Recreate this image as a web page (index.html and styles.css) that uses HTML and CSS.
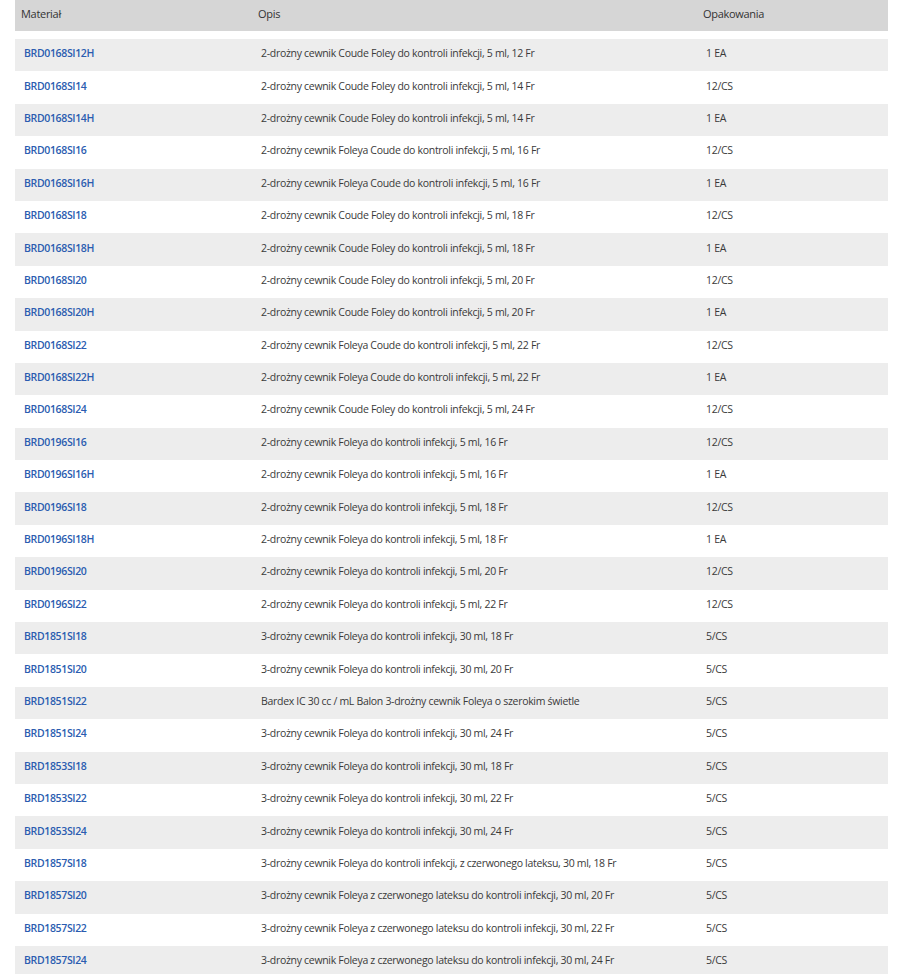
FILE: index.html
```html
<!DOCTYPE html>
<html lang="pl">
<head>
<meta charset="utf-8">
<title>Materiały</title>
<link rel="stylesheet" href="styles.css">
</head>
<body>
<div class="table">
  <div class="head">
    <div class="hcell">Materiał</div>
    <div class="hcell">Opis</div>
    <div class="hcell">Opakowania</div>
  </div>
  <div class="row"><a class="cell mat" href="#">BRD0168SI12H</a><div class="cell">2-drożny cewnik Coude Foley do kontroli infekcji, 5 ml, 12 Fr</div><div class="cell">1 EA</div></div>
  <div class="row"><a class="cell mat" href="#">BRD0168SI14</a><div class="cell">2-drożny cewnik Coude Foley do kontroli infekcji, 5 ml, 14 Fr</div><div class="cell">12/CS</div></div>
  <div class="row"><a class="cell mat" href="#">BRD0168SI14H</a><div class="cell">2-drożny cewnik Coude Foley do kontroli infekcji, 5 ml, 14 Fr</div><div class="cell">1 EA</div></div>
  <div class="row"><a class="cell mat" href="#">BRD0168SI16</a><div class="cell">2-drożny cewnik Foleya Coude do kontroli infekcji, 5 ml, 16 Fr</div><div class="cell">12/CS</div></div>
  <div class="row"><a class="cell mat" href="#">BRD0168SI16H</a><div class="cell">2-drożny cewnik Foleya Coude do kontroli infekcji, 5 ml, 16 Fr</div><div class="cell">1 EA</div></div>
  <div class="row"><a class="cell mat" href="#">BRD0168SI18</a><div class="cell">2-drożny cewnik Coude Foley do kontroli infekcji, 5 ml, 18 Fr</div><div class="cell">12/CS</div></div>
  <div class="row"><a class="cell mat" href="#">BRD0168SI18H</a><div class="cell">2-drożny cewnik Coude Foley do kontroli infekcji, 5 ml, 18 Fr</div><div class="cell">1 EA</div></div>
  <div class="row"><a class="cell mat" href="#">BRD0168SI20</a><div class="cell">2-drożny cewnik Coude Foley do kontroli infekcji, 5 ml, 20 Fr</div><div class="cell">12/CS</div></div>
  <div class="row"><a class="cell mat" href="#">BRD0168SI20H</a><div class="cell">2-drożny cewnik Coude Foley do kontroli infekcji, 5 ml, 20 Fr</div><div class="cell">1 EA</div></div>
  <div class="row"><a class="cell mat" href="#">BRD0168SI22</a><div class="cell">2-drożny cewnik Foleya Coude do kontroli infekcji, 5 ml, 22 Fr</div><div class="cell">12/CS</div></div>
  <div class="row"><a class="cell mat" href="#">BRD0168SI22H</a><div class="cell">2-drożny cewnik Foleya Coude do kontroli infekcji, 5 ml, 22 Fr</div><div class="cell">1 EA</div></div>
  <div class="row"><a class="cell mat" href="#">BRD0168SI24</a><div class="cell">2-drożny cewnik Coude Foley do kontroli infekcji, 5 ml, 24 Fr</div><div class="cell">12/CS</div></div>
  <div class="row"><a class="cell mat" href="#">BRD0196SI16</a><div class="cell">2-drożny cewnik Foleya do kontroli infekcji, 5 ml, 16 Fr</div><div class="cell">12/CS</div></div>
  <div class="row"><a class="cell mat" href="#">BRD0196SI16H</a><div class="cell">2-drożny cewnik Foleya do kontroli infekcji, 5 ml, 16 Fr</div><div class="cell">1 EA</div></div>
  <div class="row"><a class="cell mat" href="#">BRD0196SI18</a><div class="cell">2-drożny cewnik Foleya do kontroli infekcji, 5 ml, 18 Fr</div><div class="cell">12/CS</div></div>
  <div class="row"><a class="cell mat" href="#">BRD0196SI18H</a><div class="cell">2-drożny cewnik Foleya do kontroli infekcji, 5 ml, 18 Fr</div><div class="cell">1 EA</div></div>
  <div class="row"><a class="cell mat" href="#">BRD0196SI20</a><div class="cell">2-drożny cewnik Foleya do kontroli infekcji, 5 ml, 20 Fr</div><div class="cell">12/CS</div></div>
  <div class="row"><a class="cell mat" href="#">BRD0196SI22</a><div class="cell">2-drożny cewnik Foleya do kontroli infekcji, 5 ml, 22 Fr</div><div class="cell">12/CS</div></div>
  <div class="row"><a class="cell mat" href="#">BRD1851SI18</a><div class="cell">3-drożny cewnik Foleya do kontroli infekcji, 30 ml, 18 Fr</div><div class="cell">5/CS</div></div>
  <div class="row"><a class="cell mat" href="#">BRD1851SI20</a><div class="cell">3-drożny cewnik Foleya do kontroli infekcji, 30 ml, 20 Fr</div><div class="cell">5/CS</div></div>
  <div class="row"><a class="cell mat" href="#">BRD1851SI22</a><div class="cell">Bardex IC 30 cc / mL Balon 3-drożny cewnik Foleya o szerokim świetle</div><div class="cell">5/CS</div></div>
  <div class="row"><a class="cell mat" href="#">BRD1851SI24</a><div class="cell">3-drożny cewnik Foleya do kontroli infekcji, 30 ml, 24 Fr</div><div class="cell">5/CS</div></div>
  <div class="row"><a class="cell mat" href="#">BRD1853SI18</a><div class="cell">3-drożny cewnik Foleya do kontroli infekcji, 30 ml, 18 Fr</div><div class="cell">5/CS</div></div>
  <div class="row"><a class="cell mat" href="#">BRD1853SI22</a><div class="cell">3-drożny cewnik Foleya do kontroli infekcji, 30 ml, 22 Fr</div><div class="cell">5/CS</div></div>
  <div class="row"><a class="cell mat" href="#">BRD1853SI24</a><div class="cell">3-drożny cewnik Foleya do kontroli infekcji, 30 ml, 24 Fr</div><div class="cell">5/CS</div></div>
  <div class="row"><a class="cell mat" href="#">BRD1857SI18</a><div class="cell">3-drożny cewnik Foleya do kontroli infekcji, z czerwonego lateksu, 30 ml, 18 Fr</div><div class="cell">5/CS</div></div>
  <div class="row"><a class="cell mat" href="#">BRD1857SI20</a><div class="cell">3-drożny cewnik Foleya z czerwonego lateksu do kontroli infekcji, 30 ml, 20 Fr</div><div class="cell">5/CS</div></div>
  <div class="row"><a class="cell mat" href="#">BRD1857SI22</a><div class="cell">3-drożny cewnik Foleya z czerwonego lateksu do kontroli infekcji, 30 ml, 22 Fr</div><div class="cell">5/CS</div></div>
  <div class="row"><a class="cell mat" href="#">BRD1857SI24</a><div class="cell">3-drożny cewnik Foleya z czerwonego lateksu do kontroli infekcji, 30 ml, 24 Fr</div><div class="cell">5/CS</div></div>
</div>
</body>
</html>
```

FILE: styles.css
```css
html, body {
  margin: 0;
  padding: 0;
  background: #fff;
}
body {
  font-family: "Open Sans", "Noto Sans", sans-serif;
  color: #333;
}
.table {
  width: 873px;
  margin-left: 15px;
}
.head, .row {
  display: grid;
  grid-template-columns: 237px 445px 191px;
  align-items: center;
}
.head {
  height: 31px;
  background: #d6d6d6;
  margin-bottom: 8px;
}
.hcell {
  padding-left: 6px;
  padding-bottom: 4px;
  font-size: 11px;
  letter-spacing: -0.3px;
  color: #333;
  white-space: nowrap;
}
.row {
  height: 32.4px;
}
.row:nth-child(even) {
  background: #ededed;
}
.cell {
  padding-left: 9px;
  padding-bottom: 4px;
  font-size: 10.5px;
  letter-spacing: -0.3px;
  color: #3a3a3a;
  white-space: nowrap;
}
.mat {
  color: #2a5cb0;
  text-decoration: none;
  font-weight: 600;
  letter-spacing: -0.35px;
}
```
